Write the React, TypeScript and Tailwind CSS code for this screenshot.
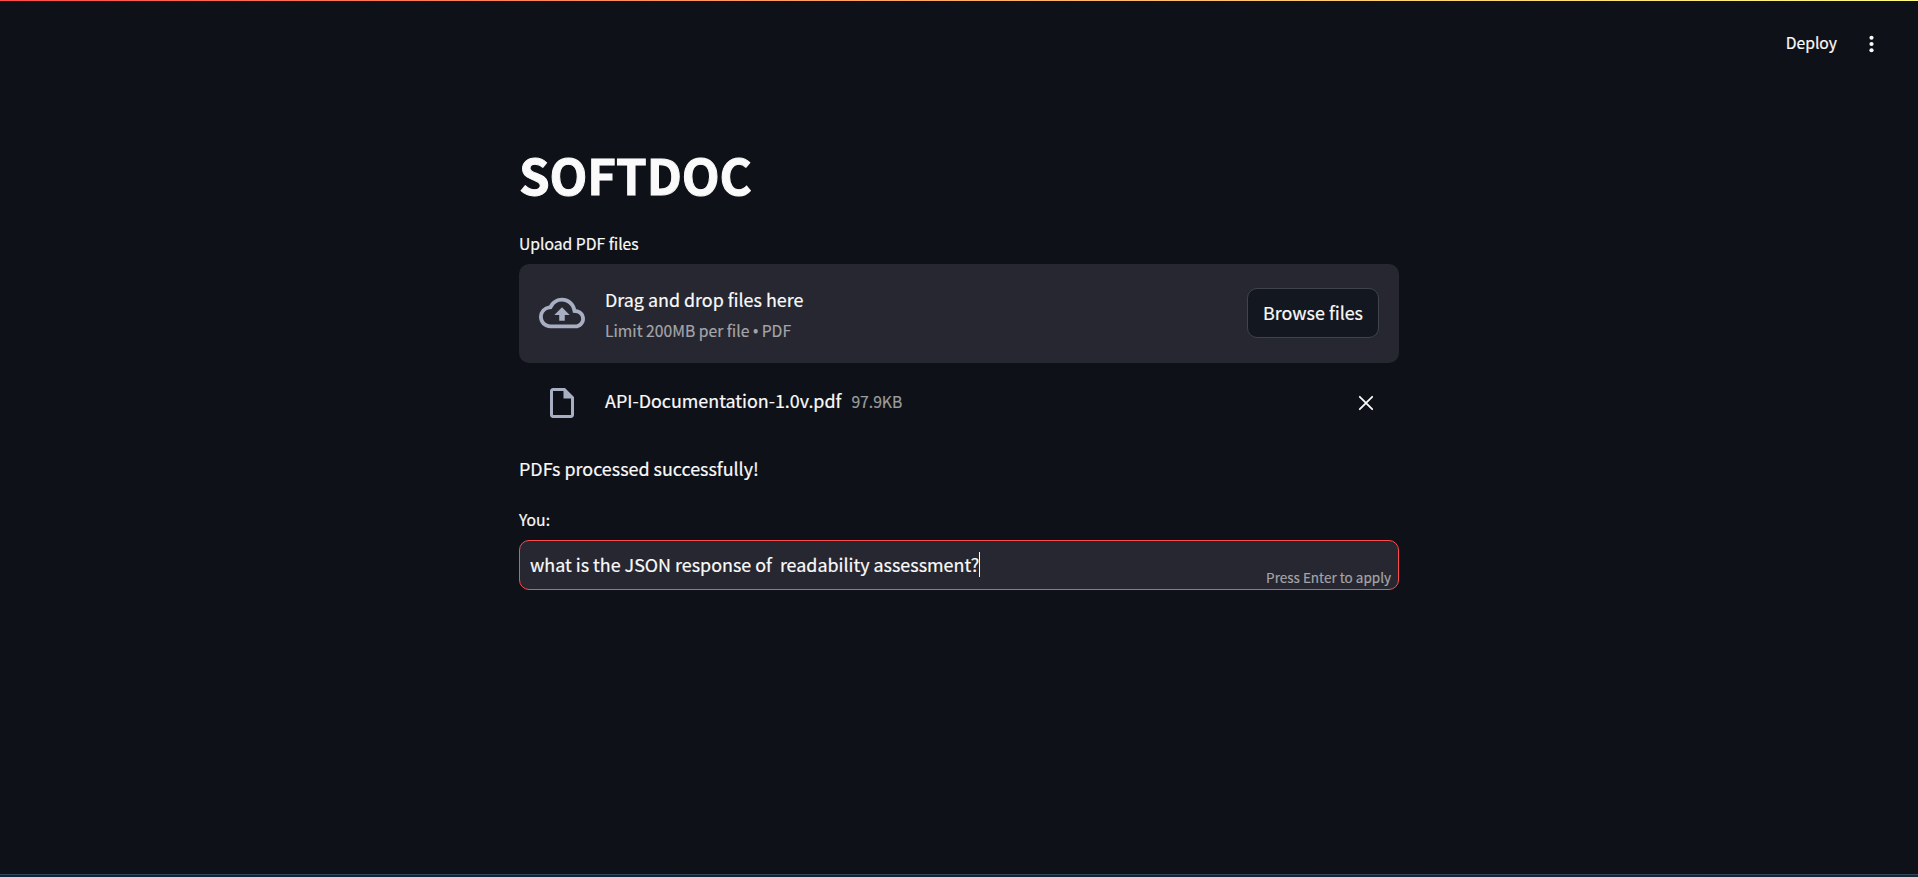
import type { ReactNode } from "react";

function CloudUploadIcon() {
  return (
    <svg viewBox="0 0 24 24" className="size-[46px] shrink-0 fill-[#a9afc3]" aria-hidden="true">
      <path d="M19.35 10.04A7.49 7.49 0 0 0 12 4C9.11 4 6.6 5.64 5.35 8.04A5.994 5.994 0 0 0 0 14c0 3.31 2.69 6 6 6h13c2.76 0 5-2.24 5-5 0-2.64-2.05-4.78-4.65-4.96zM19 18H6c-2.21 0-4-1.79-4-4 0-2.05 1.53-3.76 3.56-3.97l1.07-.11.5-.95A5.469 5.469 0 0 1 12 6c2.62 0 4.88 1.86 5.39 4.43l.3 1.5 1.53.11A2.98 2.98 0 0 1 22 15c0 1.65-1.35 3-3 3zM8 13h2.55v3h2.9v-3H16l-4-4z" />
    </svg>
  );
}

function FileIcon() {
  return (
    <svg viewBox="0 0 24 24" className="size-9 shrink-0 fill-[#a9afc3]" aria-hidden="true">
      <path d="M14 2H6c-1.1 0-1.99.9-1.99 2L4 20c0 1.1.89 2 1.99 2H18c1.1 0 2-.9 2-2V8l-6-6zM6 20V4h7v5h5v11H6z" />
    </svg>
  );
}

function CloseIcon() {
  return (
    <svg viewBox="0 0 16 16" className="size-4 fill-none stroke-[#fafafa] stroke-[1.8]" aria-hidden="true">
      <path d="M1.8 1.8l12.4 12.4M14.2 1.8l-12.4 12.4" strokeLinecap="round" />
    </svg>
  );
}

function MenuIcon() {
  return (
    <svg viewBox="0 0 6 18" className="h-[18px] w-1.5 fill-[#fafafa]" aria-hidden="true">
      <circle cx="2.5" cy="2.75" r="2.1" />
      <circle cx="2.5" cy="9" r="2.1" />
      <circle cx="2.5" cy="15.25" r="2.1" />
    </svg>
  );
}

function Label({ children }: { children: ReactNode }) {
  return <div className="h-[30px] text-[15.7px] leading-5">{children}</div>;
}

export default function App() {
  return (
    <div className="flex h-[877px] flex-col bg-[#0e1117] font-['Noto_Sans_CJK_SC','Source_Sans_Pro',sans-serif] text-[17.9px] text-[#fafafa] [-webkit-text-stroke:0.2px]">
      <div className="h-px shrink-0 bg-linear-to-r from-[#ff4b4b] to-[#fffd80]" />

      <header className="flex h-[85px] shrink-0 items-center justify-end gap-8 pr-[43px]">
        <button className="pb-0.5 text-[15.7px] leading-5">Deploy</button>
        <button aria-label="Menu">
          <MenuIcon />
        </button>
      </header>

      <main className="mx-auto flex w-[880px] grow flex-col pt-[58px]">
        <h1 className="h-[90px] text-[49.2px] leading-[60px] font-bold tracking-[-0.1px] [-webkit-text-stroke:1px]">
          SOFTDOC
        </h1>

        <Label>Upload PDF files</Label>
        <section className="flex h-[99px] items-center rounded-[10px] bg-[#262730] px-5 pb-px">
          <CloudUploadIcon />
          <div className="ml-5 flex grow flex-col gap-2 pt-0.5">
            <span className="leading-[26px]">Drag and drop files here</span>
            <span className="text-[15.7px] leading-[22px] text-[#a5a5a9]">
              Limit 200MB per file <span className="font-['Open_Sans',sans-serif] text-[14px] [-webkit-text-stroke:1px]">•</span> PDF
            </span>
          </div>
          <button className="flex h-[50px] w-[132px] items-center justify-center rounded-[10px] border border-[#41434b] bg-[#131720] pb-px">
            Browse files
          </button>
        </section>

        <div className="flex h-20 items-center pr-[25px] pl-[25px]">
          <FileIcon />
          <div className="ml-[25px] flex grow items-baseline gap-2.5 pb-[5px]">
            <span>API-Documentation-1.0v.pdf</span>
            <span className="text-[15.7px] text-[#9c9d9f]">97.9KB</span>
          </div>
          <button aria-label="Remove file" className="pb-px">
            <CloseIcon />
          </button>
        </div>

        <p className="mt-[11px] h-14 leading-[29px]">PDFs processed successfully!</p>

        <Label>You:</Label>
        <div className="relative flex h-[50px] items-center rounded-[10px] border border-[#ff4b4b] bg-[#262730] px-2.5 pb-0.5">
          <span className="whitespace-pre">what is the JSON response of  readability assessment?</span>
          <span className="h-[25px] w-px bg-[#fafafa]" />
          <span className="absolute right-[7px] bottom-[2px] text-[13.5px] leading-5 text-[#a5a5a9]">
            Press Enter to apply
          </span>
        </div>
      </main>

      <div className="h-[3px] shrink-0 border-t border-[#34465a] bg-linear-to-r from-[#10243c] to-[#142836]" />
    </div>
  );
}
